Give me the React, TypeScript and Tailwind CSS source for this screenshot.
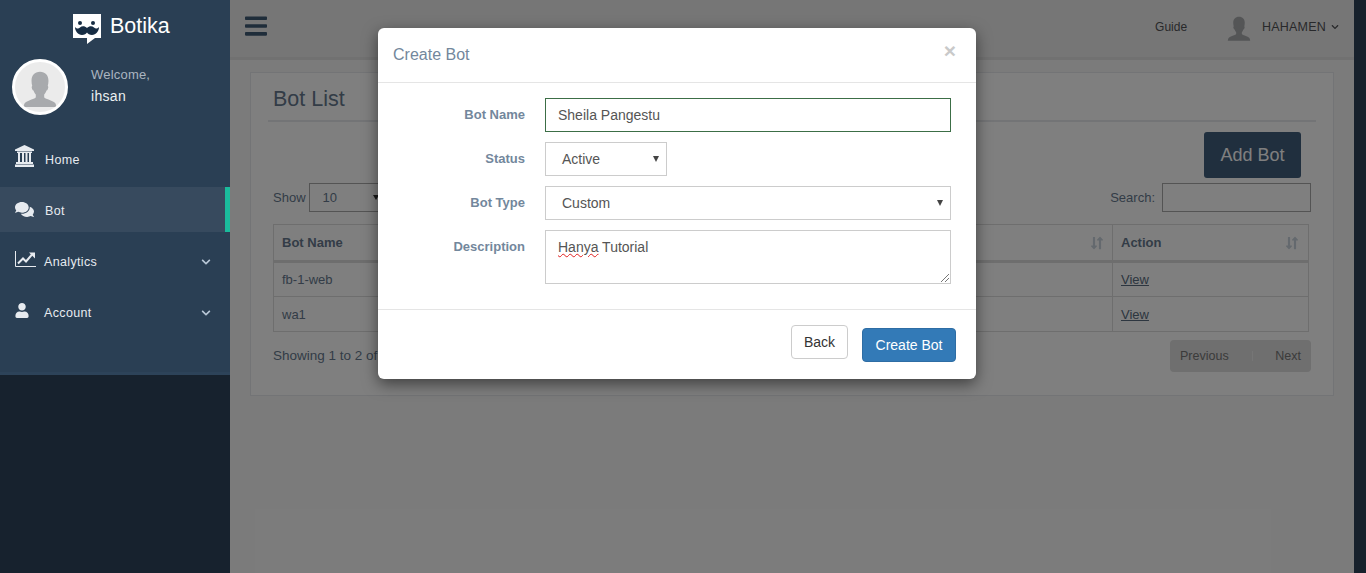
import React from "react";
import {
  FaBars,
  FaChevronDown,
  FaComments,
  FaUser,
  FaLongArrowAltDown,
  FaLongArrowAltUp,
} from "react-icons/fa";

const font = "font-['Liberation_Sans',Arial,sans-serif]";

const UserPhoto = ({ className }: { className: string }) => (
  <svg viewBox="0 0 56 56" className={className}>
    <path
      d="M28 11c-6 0-9.500 4-9.500 10 0 2 .3 4 .8 6-.8.400-.8 2 0 3.500.4 1 1 1.300 1.500 1.500.5 2 1.500 3.500 2.500 4.500v3c-1 2-8 3-12 6-1 1-1.500 3-1.800 5h37c-.3-2-.8-4-1.800-5-4-3-11-4-12-6v-3c1-1 2-2.500 2.500-4.500.5-.2 1.100-.5 1.500-1.500.8-1.500.8-3.100 0-3.500.5-2 .8-4 .8-6 0-6-3.500-10-9.500-10z"
      fill="#a8aaad"
    />
  </svg>
);

const Logo = () => (
  <svg viewBox="0 0 28 30" className="w-7 h-[30px] shrink-0">
    <path d="M0 0h28v24h-6l-8 6v-6H0z" fill="#fff" />
    <circle cx="7" cy="9" r="2" fill="#172d44" />
    <circle cx="20" cy="9" r="2" fill="#172d44" />
    <path
      d="M14 14c2-2 5-2.500 7-.5 1.500 1.500 3 1.500 5-.5 0 4-3 8-7 8-2.500 0-4-1-5-2.500-1 1.500-2.500 2.500-5 2.500-4 0-7-4-7-8 2 2 3.500 2 5 .5 2-2 5-1.500 7 .5z"
      fill="#172d44"
    />
  </svg>
);

const BankIcon = () => (
  <svg viewBox="0 0 19 22" className="w-[19px] h-[22px] mt-[-5px] fill-current">
    <path d="M9.500 0 19 4.500V6H0V4.500z" />
    <path d="M2 6.500h15V8H2z" />
    <path d="M3 8h2v9H3zM7 8h2v9H7zM10.500 8h2v9h-2zM14 8h2v9h-2z" />
    <path d="M1 17h17v2H1zM0 19.500h19V22H0z" />
  </svg>
);

const ChartIcon = () => (
  <svg viewBox="0 0 21 16" className="w-[21px] h-4 mt-[-3px]">
    <path d="M.5 0v15.500H21" stroke="currentColor" fill="none" />
    <path d="M3 12.500 8 7.500l3 3 6-7" stroke="currentColor" strokeWidth="2" fill="none" />
    <path d="M14 1.500h6v6z" fill="currentColor" />
  </svg>
);

const menu = [
  { label: "Home", icon: <BankIcon />, gap: "ml-[11px]" },
  { label: "Bot", icon: <FaComments className="w-[19px] h-[17px]" />, gap: "ml-[11px]", active: true },
  { label: "Analytics", icon: <ChartIcon />, gap: "ml-2", more: true },
  { label: "Account", icon: <FaUser className="w-[14px] h-[15px] mr-[7px] mt-[-2px]" />, gap: "ml-2", more: true },
];

const SortIcon = () => (
  <span className="flex text-[#c9d3dc]">
    <FaLongArrowAltDown className="w-[8px] h-[14px] -mr-[2px]" />
    <FaLongArrowAltUp className="w-[8px] h-[14px]" />
  </span>
);

const Sidebar = () => (
  <aside className="relative z-20 w-[230px] shrink-0 h-full bg-[#17222e]">
    <div className="h-[375px] bg-[#2a3f54] border-b-[3px] border-[#2d4359]">
      <div className="flex items-center gap-[9px] pl-[73px] pt-[14px] h-[59px] pb-[15px]">
        <Logo />
        <span className="text-[21.500px] leading-none text-white mt-[-4px]">Botika</span>
      </div>
      <div className="flex items-center px-3 h-[56px]">
        <div className="w-14 h-14 rounded-full bg-[#ebebeb] border-[3px] border-white overflow-hidden shrink-0">
          <UserPhoto className="w-full h-full" />
        </div>
        <div className="ml-[23px]">
          <div className="text-[13px] leading-[15px] tracking-[0.2px] text-[#aab5c0] mt-[-3px]">Welcome,</div>
          <div className="text-[14px] leading-4 tracking-[0.3px] text-[#ecf0f1] mt-[6px]">ihsan</div>
        </div>
      </div>
      <nav className="mt-[21px]">
        {menu.map((m) => (
          <div
            key={m.label}
            className={
              m.active
                ? "flex items-center h-[45px] mb-[6px] pl-[15px] pr-4 text-[#e7ebf0] bg-[#374a5e] border-r-[5px] border-[#1abb9c]"
                : "flex items-center h-[45px] mb-[6px] pl-[15px] pr-[19px] text-[#e7ebf0]"
            }
          >
            {m.icon}
            <span className={`${m.gap} mt-1 text-[12.500px] tracking-[0.35px]`}>{m.label}</span>
            {m.more && <FaChevronDown className="ml-auto mt-[3px] w-[10px] h-[10px] text-[#b8c7d6]" />}
          </div>
        ))}
      </nav>
    </div>
  </aside>
);

const TopNav = () => (
  <header className="flex items-center h-[60px] bg-[#ededed] border-b-[3px] border-[#e3e3e3] pl-[15px] pr-[15px] shrink-0">
    <FaBars className="w-[22px] h-[26px] text-[#3f5a75] mt-[-6px]" />
    <span className="ml-auto text-[12px] text-[#515356] mt-[-3px]">Guide</span>
    <UserPhoto className="w-[34px] h-[34px] ml-[35px] mt-[-3px]" />
    <span className="ml-[6px] text-[12.500px] text-[#515356] tracking-[0.2px] mt-[-3px]">HAHAMEN</span>
    <FaChevronDown className="ml-[5px] w-[8px] h-[8px] text-[#515356] mt-[-3px]" />
  </header>
);

const Card = () => (
  <section className="mt-3 ml-5 mr-5 h-[324px] bg-white border border-[#e6e9ed] px-[17px] pt-[10px] text-[#66798e]">
    <div className="h-[39px] border-b-2 border-[#e6e9ed]">
      <h2 className="pl-[5px] text-[21.500px] leading-[32px]">Bot List</h2>
    </div>
    <div className="flex justify-end mt-[10px] pr-[15px]">
      <button className="w-[97px] h-[46px] rounded-[3px] bg-[#405e7c] text-white text-[18px]">Add Bot</button>
    </div>
    <div className="flex items-center justify-between mt-[5px] px-[5px] text-[13px]">
      <div className="flex items-center gap-[3px]">
        <span>Show</span>
        <div className="flex items-center justify-between w-[75px] h-[29px] border border-[#a9a9a9] pl-[13px] pr-[4px]">
          <span>10</span>
          <span className="w-0 h-0 border-x-[3px] border-t-[5px] border-x-transparent border-t-[#333]" />
        </div>
        <span>entries</span>
      </div>
      <div className="flex items-center gap-[7px]">
        <span>Search:</span>
        <div className="w-[149px] h-[29px] border border-[#a9a9a9]" />
      </div>
    </div>
    <table className="mt-3 ml-[5px] w-[1036px] border border-[#ddd] border-collapse text-[13px]">
      <thead>
        <tr className="h-[37px] border-b-[3px] border-[#ddd]">
          <th className="border-r border-[#ddd] pl-2 pr-2 text-left font-bold">
            <div className="flex items-center justify-between">
              Bot Name
              <SortIcon />
            </div>
          </th>
          <th className="w-[196px] pl-2 pr-[9px] text-left font-bold">
            <div className="flex items-center justify-between">
              Action
              <SortIcon />
            </div>
          </th>
        </tr>
      </thead>
      <tbody>
        {["fb-1-web", "wa1"].map((name, i) => (
          <tr key={name} className="h-[35px] border-b border-[#ddd]">
            <td className={i === 1 ? "border-r border-[#ddd] pl-2 pt-[2px]" : "border-r border-[#ddd] pl-2"}>{name}</td>
            <td className={i === 1 ? "pl-2 pt-[2px] underline text-[#5a6c80]" : "pl-2 underline text-[#5a6c80]"}>View</td>
          </tr>
        ))}
      </tbody>
    </table>
    <div className="flex items-start justify-between mt-2 px-[5px] text-[13.500px]">
      <span className="mt-[6px]">Showing 1 to 2 of 2 entries</span>
      <div className="flex items-center w-[141px] h-[32px] rounded-[4px] bg-[#dedede] pl-[10px] pr-[10px] text-[12.500px] text-[#777]">
        <span>Previous</span>
        <span className="ml-[23px] w-px h-[10px] bg-[#ececec]" />
        <span className="ml-auto">Next</span>
      </div>
    </div>
  </section>
);

const labelClass = "text-right text-[13px] leading-[34px] font-bold text-[#73879c]";
const fieldClass =
  "h-[34px] border border-[#ccc] bg-white flex items-center justify-between text-[14px] text-[#555] pl-4 pr-[7px]";
const Arrow = () => (
  <span className="w-0 h-0 border-x-[3.500px] border-t-[6px] border-x-transparent border-t-[#444]" />
);

const Modal = () => (
  <div className="absolute z-30 left-[378px] top-[28px] w-[598px] h-[351px] bg-white rounded-[6px] shadow-[0_5px_15px_rgba(0,0,0,0.5)] flex flex-col">
    <div className="flex items-start justify-between h-[55px] border-b border-[#e5e5e5] pl-[15px] pr-5 shrink-0">
      <h3 className="mt-[17px] text-[16px] leading-5 text-[#73879c]">Create Bot</h3>
      <span className="mt-[11px] text-[21px] leading-6 font-bold text-[#c9c9c9]">×</span>
    </div>
    <div className="grid grid-cols-[147px_406px] content-start gap-x-5 gap-y-[10px] pt-[15px] h-[227px] border-b border-[#e5e5e5] shrink-0">
      <label className={labelClass}>Bot Name</label>
      <div className="h-[34px] border border-[#3c6e46] flex items-center pl-3 text-[14px] text-[#555]">Sheila Pangestu</div>
      <label className={labelClass}>Status</label>
      <div className={`${fieldClass} w-[122px]`}>
        Active
        <Arrow />
      </div>
      <label className={labelClass}>Bot Type</label>
      <div className={fieldClass}>
        Custom
        <Arrow />
      </div>
      <label className={labelClass}>Description</label>
      <div className="relative h-[54px] border border-[#ccc] pl-3 pt-[6px] text-[14px] leading-5 text-[#555]">
        <span className="underline decoration-wavy decoration-[#e02020] decoration-1">Hanya</span> Tutorial
        <svg viewBox="0 0 10 10" className="absolute right-0 bottom-0 w-[10px] h-[10px]">
          <path d="M1 9 9 1M5 9 9 5" stroke="#777" strokeWidth="1" fill="none" />
        </svg>
      </div>
    </div>
    <div className="flex items-start justify-end gap-[14px] pt-[15px] pr-5">
      <button className="w-[57px] h-[34px] rounded-[4px] border border-[#ccc] bg-white text-[14px] text-[#333]">Back</button>
      <button className="mt-[3px] w-[94px] h-[34px] rounded-[4px] bg-[#337ab7] border border-[#2e6da4] text-[14px] text-white">
        Create Bot
      </button>
    </div>
  </div>
);

const App = () => {
  return (
    <div className={`${font} relative flex w-[1366px] h-[573px] overflow-hidden bg-[#2e4358]`}>
      <Sidebar />
      <main className="w-[1124px] h-full bg-[#f7f7f7] flex flex-col">
        <TopNav />
        <Card />
      </main>
      <div className="absolute inset-0 z-10 bg-black/50" />
      <Modal />
    </div>
  );
};

export default App;
